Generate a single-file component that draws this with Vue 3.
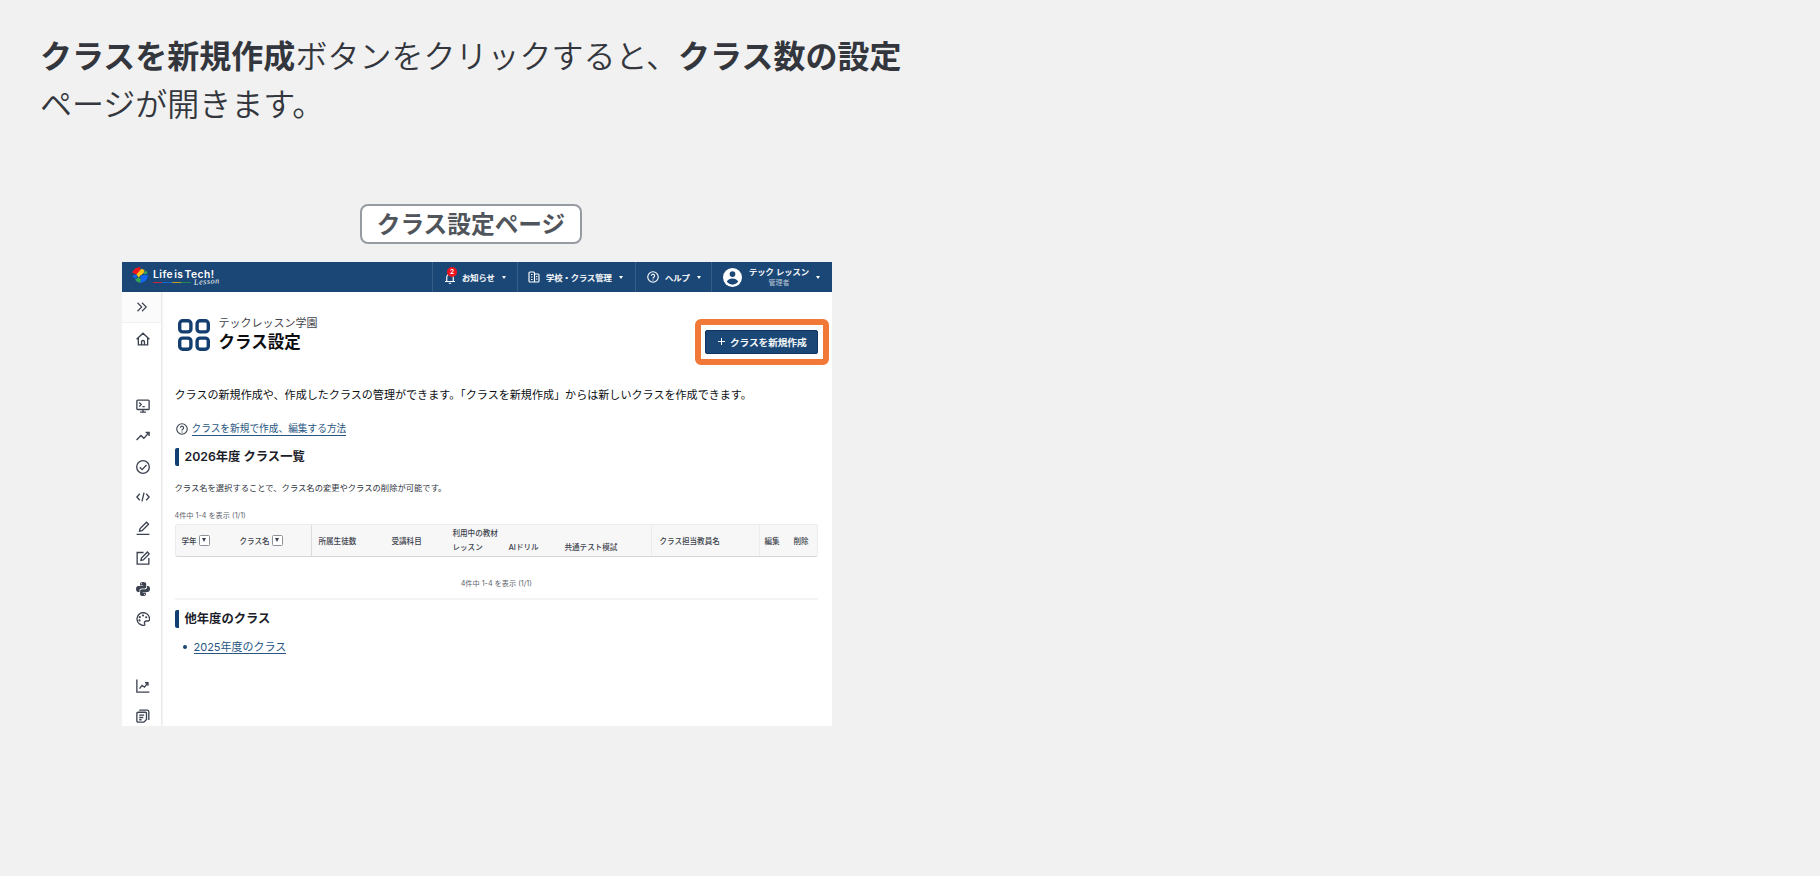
<script setup>
const navItems = [
  { id: 'news', label: 'お知らせ', badge: 2 },
  { id: 'school', label: '学校・クラス管理' },
  { id: 'help', label: 'ヘルプ' },
]

const sideIcons = [
  'home',
  'monitor',
  'trend',
  'check',
  'code',
  'pen',
  'edit',
  'python',
  'palette',
  'chart',
  'docs',
]

const countText = '4件中 1-4 を表示 (1/1)'
</script>

<template>
  <div class="slide">
    <p class="lead"><strong>クラスを新規作成</strong>ボタンをクリックすると、<strong>クラス数の設定</strong><br />ページが開きます。</p>

    <div class="figure">
      <div class="caption">クラス設定ページ</div>

      <div class="window">
        <header class="topbar">
          <div class="brand">
            <svg class="brand-mark" viewBox="0 0 16 16">
              <path d="M0.2 5.8 C1.4 2.400 4.400 0.200 8.400 0.300 L8 4.200 L4.600 7.400 Z" fill="#f2161b" />
              <path d="M4.400 7.600 L9.400 1.800 L12.600 3 L11.600 6.200 L8.400 8.600 L6.800 10.400 Z" fill="#fbc311" />
              <path d="M0.400 8.400 L4.200 7.800 L5.400 10.600 L2.400 11.600 Z" fill="#1266f1" />
              <path d="M3 12.600 L6.800 10.200 L9 12 L8.400 15.800 C6.200 15.800 4.200 14.600 3 12.600 Z" fill="#35a853" />
              <path d="M8.400 8.600 L15.900 7.800 C15.900 12.400 12.800 15.600 8.600 15.900 L9 12 Z" fill="#1266f1" />
              <path d="M11.800 5.600 L14.200 3.600 L15.600 6.200 L12.200 7.400 Z" fill="#35a853" />
            </svg>
            <div class="brand-text">
              <span class="brand-name">Life is Tech!</span>
              <div class="brand-sub">
                <span class="stripe"></span>
                <span class="lesson">Lesson</span>
              </div>
            </div>
          </div>

          <nav class="nav">
            <div v-for="item in navItems" :key="item.id" class="nav-item" :class="item.id">
              <span class="nav-icon">
                <svg v-if="item.id === 'news'" viewBox="0 0 24 24">
                  <path d="M2 19h20M5.500 19v-8a6.500 6.500 0 0 1 13 0v8M9.500 22.500h5" />
                </svg>
                <svg v-else-if="item.id === 'school'" viewBox="0 0 24 24">
                  <path d="M13 22H4a2 2 0 0 1-2-2V4a2 2 0 0 1 2-2h7a2 2 0 0 1 2 2v18h7a2 2 0 0 0 2-2V8a2 2 0 0 0-2-2h-7M6 7h3M6 12h3M6 17h3M16 11h3M16 16h3" />
                </svg>
                <svg v-else viewBox="0 0 24 24">
                  <circle cx="12" cy="12" r="10.500" />
                  <path d="M8.800 9.600a3.200 3.200 0 1 1 4.800 2.800c-1.100.7-1.600 1.200-1.600 2.400M12 16.800v2" />
                </svg>
                <span v-if="item.badge" class="badge">{{ item.badge }}</span>
              </span>
              <span class="nav-label">{{ item.label }}</span>
              <span class="caret"></span>
            </div>

            <div class="nav-item user">
              <svg class="avatar" viewBox="0 0 24 24">
                <circle cx="12" cy="12" r="12" fill="#fff" />
                <circle cx="12" cy="7.700" r="3.600" fill="#1b4776" />
                <path d="M4.800 17.200c1.400-2.600 4.200-3.900 7.200-3.900s5.800 1.300 7.200 3.900c-1.600 2.300-4.200 3.800-7.200 3.800s-5.600-1.500-7.200-3.800z" fill="#1b4776" />
              </svg>
              <div class="user-text">
                <span class="user-name">テック レッスン</span>
                <span class="user-role">管理者</span>
              </div>
              <span class="caret"></span>
            </div>
          </nav>
        </header>

        <div class="body">
          <aside class="sidebar">
            <div class="expand">
              <svg viewBox="0 0 24 24"><path d="M3 3.500l8.500 8.500L3 20.500M12 3.500l8.500 8.500-8.500 8.500" /></svg>
            </div>
            <div v-for="icon in sideIcons" :key="icon" class="side-item" :class="icon">
              <svg viewBox="0 0 24 24">
                <path v-if="icon === 'home'" d="M1 12.500L12 2l11 10.500M4 10v12h16V10M9.500 22v-5a2.500 2.500 0 0 1 5 0v5" />
                <path v-else-if="icon === 'monitor'" d="M3 2h18a1.500 1.500 0 0 1 1.500 1.500v13A1.500 1.500 0 0 1 21 18H3a1.500 1.500 0 0 1-1.500-1.500v-13A1.500 1.500 0 0 1 3 2zM12 18v4.500M7 22.500h10M5.500 6l3.500 3.500L5.500 13M11 13h4" />
                <path v-else-if="icon === 'trend'" d="M1 19l7.500-8 5 5L22 6.500M16.500 6H22.500v6" />
                <template v-else-if="icon === 'check'">
                  <circle cx="12" cy="12" r="10.800" />
                  <path d="M6.500 12.500l4 4 7.500-8" />
                </template>
                <path v-else-if="icon === 'code'" d="M6.500 6.500L1.500 12l5 5.500M17.500 6.500l5 5.500-5 5.500M13.800 4.500l-3.600 15" />
                <path v-else-if="icon === 'pen'" d="M1 23h22M6 17.500l1-4.500L18 2l3.500 3.500L10.500 16.500z" />
                <path v-else-if="icon === 'edit'" d="M13 2.500H2v20h20V12M8.500 16l.8-4L19.500 1.800l3.200 3.200L12.500 15.200z" />
                <g v-else-if="icon === 'python'" class="solid">
                  <path d="M12 0C8.500 0 7 1.200 7 3.200V6h5.500v1H4C1.500 7 0 9 0 12s1.300 5 3.500 5H6v-2.500C6 12.500 7.500 11 9.500 11h5c1.700 0 3-1.300 3-3V3.200C17.500 1.200 15.500 0 12 0zM9.500 2a1 1 0 1 1 0 2 1 1 0 0 1 0-2z" />
                  <path d="M12 24c3.500 0 5-1.200 5-3.200V18h-5.500v-1H20c2.500 0 4-2 4-5s-1.300-5-3.500-5H18.800v2.500c0 1.900-1.600 3-3.300 3h-5c-2 0-3.500 1.300-3.500 3v5.300c0 2 1.500 3.200 5 3.200zM14.500 22a1 1 0 1 1 0-2 1 1 0 0 1 0 2z" />
                </g>
                <template v-else-if="icon === 'palette'">
                  <path d="M12 1a11 11 0 1 0 1.500 22c2-.3 2-2 1.300-3.300-1-2 .2-4.200 2.700-4.200H21c1.500 0 2.300-1.500 2.300-3.500C23 5.500 18 1 12 1z" />
                  <g class="solid">
                    <circle cx="6" cy="14.500" r="1.900" />
                    <circle cx="6.500" cy="8.800" r="1.900" />
                    <circle cx="12" cy="6" r="1.900" />
                    <circle cx="17.500" cy="9" r="1.900" />
                  </g>
                </template>
                <path v-else-if="icon === 'chart'" d="M1.500 1v21.500H23M6 16.500l4.500-5.500 4 3L20 7M15.500 6.500H20.500v5" />
                <path v-else d="M3.500 5.500h12.500a2 2 0 0 1 2 2V18l-4.500 4.500H3.500a2 2 0 0 1-2-2v-13a2 2 0 0 1 2-2zM5.500 2H19a3 3 0 0 1 3 3v14M5.500 10.500h8.500M5.500 14.500h7M5.500 18.500h4" />
              </svg>
            </div>
          </aside>

          <main class="content">
            <div class="page-head">
              <svg class="page-icon" viewBox="0 0 32 32">
                <rect x="1.700" y="1.700" width="11.200" height="11.200" rx="3" />
                <rect x="19.100" y="1.700" width="11.200" height="11.200" rx="3" />
                <rect x="1.700" y="19.100" width="11.200" height="11.200" rx="3" />
                <rect x="19.100" y="19.100" width="11.200" height="11.200" rx="3" />
              </svg>
              <div class="page-title">
                <span class="school-name">テックレッスン学園</span>
                <h1>クラス設定</h1>
              </div>
              <div class="highlight">
                <button class="create-btn"><span class="plus"></span>クラスを新規作成</button>
              </div>
            </div>

            <p class="description">クラスの新規作成や、作成したクラスの管理ができます。「クラスを新規作成」からは新しいクラスを作成できます。</p>

            <div class="help-row">
              <svg viewBox="0 0 24 24">
                <circle cx="12" cy="12" r="10.500" />
                <path d="M8.800 9.600a3.200 3.200 0 1 1 4.800 2.800c-1.100.7-1.600 1.200-1.600 2.400M12 16.800v2" />
              </svg>
              <a>クラスを新規で作成、編集する方法</a>
            </div>

            <h2>2026年度 クラス一覧</h2>
            <p class="note">クラス名を選択することで、クラス名の変更やクラスの削除が可能です。</p>
            <p class="count">{{ countText }}</p>

            <div class="table-head">
              <div class="cell grade">学年<span class="filter"></span></div>
              <div class="cell name">クラス名<span class="filter"></span></div>
              <div class="cell students">所属生徒数</div>
              <div class="cell subject">受講科目</div>
              <div class="cell material">
                <span>利用中の教材</span>
                <div class="material-cols">
                  <span>レッスン</span>
                  <span>AIドリル</span>
                  <span>共通テスト模試</span>
                </div>
              </div>
              <div class="cell teacher">クラス担当教員名</div>
              <div class="cell edit">編集</div>
              <div class="cell delete">削除</div>
            </div>

            <p class="count bottom">{{ countText }}</p>

            <h2>他年度のクラス</h2>
            <ul class="years">
              <li><a>2025年度のクラス</a></li>
            </ul>
          </main>
        </div>
      </div>
    </div>
  </div>
</template>

<style>
body {
  background: #f1f1f1;
}
</style>

<style scoped>
.slide {
  box-sizing: border-box;
  height: 876px;
  padding: 30px 40px 0;
  overflow: hidden;
  font-family: Inter, 'Noto Sans CJK JP', sans-serif;
  color: #33373d;
}

.slide * {
  box-sizing: border-box;
}

p,
h1,
h2,
ul {
  margin: 0;
  padding: 0;
}

svg {
  display: block;
  flex: none;
  fill: none;
  stroke: currentColor;
  stroke-width: 2.3;
}

.lead {
  font-family: 'Noto Sans CJK JP', sans-serif;
  font-size: 32px;
  line-height: 48px;
  font-weight: 350;
  white-space: nowrap;
}

.lead strong {
  font-weight: 700;
}

.figure {
  display: flex;
  flex-direction: column;
  width: 710px;
  margin: 78px 0 0 82px;
}

.caption {
  width: 222px;
  height: 40px;
  margin-left: 238px;
  padding-top: 1px;
  border: 2px solid #969ba1;
  border-radius: 8px;
  background: #fff;
  font-size: 23.7px;
  line-height: 36px;
  font-weight: 600;
  text-align: center;
  color: #50555b;
  white-space: nowrap;
}

.window {
  display: flex;
  flex-direction: column;
  height: 464px;
  margin-top: 18px;
  overflow: hidden;
  background: #fff;
  white-space: nowrap;
}

.topbar {
  display: flex;
  justify-content: space-between;
  flex: none;
  height: 30px;
  background: #1b4776;
  color: #fff;
}

.brand {
  display: flex;
  padding: 5px 0 0 10px;
}

.brand-mark {
  width: 16px;
  height: 16px;
  stroke: none;
}

.brand-text {
  margin-left: 5px;
}

.brand-name {
  display: block;
  height: 13px;
  font-size: 10.3px;
  line-height: 14px;
  font-weight: 600;
  letter-spacing: 0.45px;
  word-spacing: -2px;
}

.brand-sub {
  display: flex;
  height: 6px;
}

.stripe {
  width: 38px;
  height: 1px;
  margin-top: 2px;
  background: linear-gradient(90deg, #c8283a 25%, #1266d8 25% 50%, #b99a2c 50% 75%, #218a52 75%);
}

.lesson {
  margin-left: 3px;
  font-family: 'Liberation Serif', serif;
  font-size: 8px;
  line-height: 4px;
  font-style: italic;
  letter-spacing: 0.6px;
  transform: rotate(-4deg);
}

.nav {
  display: flex;
}

.nav-item {
  display: flex;
  align-items: center;
  border-left: 1px solid #365d87;
  font-size: 8.25px;
  font-weight: 500;
}

.nav-item.news {
  width: 85px;
  padding-left: 11px;
}

.nav-item.school {
  width: 118px;
  padding-left: 10px;
}

.nav-item.help {
  width: 76px;
  padding-left: 11px;
}

.nav-item.user {
  width: 121px;
  padding-left: 11px;
}

.nav-label,
.user-name {
  -webkit-text-stroke: 0.2px currentColor;
}

.nav-label {
  margin-top: -1px;
}

.nav-icon {
  position: relative;
  margin-right: 6px;
}

.nav-icon svg {
  width: 12px;
  height: 12px;
}

.news .nav-icon svg {
  margin-top: 2px;
}

.badge {
  position: absolute;
  top: -3px;
  left: 3px;
  width: 10px;
  height: 10px;
  border-radius: 50%;
  background: #ee1420;
  font-size: 6.5px;
  line-height: 10px;
  font-weight: 600;
  text-align: center;
}

.caret {
  margin-left: 7px;
  border: 2.5px solid transparent;
  border-top: 3.5px solid #fff;
  border-bottom: 0;
}

.avatar {
  width: 19px;
  height: 19px;
  stroke: none;
}

.user-text {
  display: flex;
  flex-direction: column;
  align-items: center;
  width: 60px;
  margin-left: 7px;
}

.user-name {
  line-height: 11px;
}

.user-role {
  font-size: 7px;
  line-height: 10px;
  font-weight: 400;
  color: #b9c6d5;
}

.body {
  display: flex;
  flex: 1;
  min-height: 0;
}

.sidebar {
  flex: none;
  width: 39px;
  color: #3c4350;
  box-shadow: 1px 0 2px rgba(0, 0, 0, 0.12);
}

.expand {
  display: flex;
  align-items: center;
  height: 31px;
  padding-left: 14px;
  border-bottom: 1px solid #f0f0f0;
  background: #fbfbfb;
}

.expand svg {
  width: 12px;
  height: 12px;
  margin-top: -1px;
}

.side-item {
  display: flex;
  align-items: center;
  justify-content: center;
  height: 30.5px;
  padding: 1.5px 0 0 3px;
}

.side-item svg {
  width: 14px;
  height: 14px;
}

.side-item.monitor,
.side-item.chart {
  margin-top: 36px;
}

.solid {
  fill: currentColor;
  stroke: none;
}

.content {
  flex: 1;
  padding: 26px 14px 0 13.5px;
}

.page-head {
  display: flex;
  height: 48px;
}

.page-icon {
  width: 32px;
  height: 32px;
  margin: 0.5px 0 0 3px;
  color: #153e70;
  stroke-width: 3.4;
}

.page-title {
  margin-left: 9px;
}

.school-name {
  display: block;
  margin-top: -2px;
  font-size: 11px;
  line-height: 15px;
  color: #3f444c;
}

h1 {
  font-size: 16.5px;
  line-height: 23px;
  font-weight: 700;
  color: #0c0e12;
}

.highlight {
  width: 134px;
  height: 46px;
  margin: 1px -11px 0 auto;
  padding: 5px 4px;
  border: 6px solid #f27838;
  border-radius: 6px;
}

.create-btn {
  display: flex;
  align-items: center;
  width: 113px;
  height: 24px;
  padding: 0 0 1px 12px;
  border: 1px solid #0d3464;
  border-radius: 2px;
  background: #1b4776;
  color: #fff;
  font-family: inherit;
  font-size: 9.6px;
  font-weight: 500;
  white-space: nowrap;
  -webkit-text-stroke: 0.2px #fff;
}

.plus {
  width: 7px;
  height: 7px;
  margin-right: 5px;
  background:
    linear-gradient(#fff, #fff) center / 7px 1px no-repeat,
    linear-gradient(#fff, #fff) center / 1px 7px no-repeat;
}

.description {
  margin-top: 20px;
  font-size: 11.07px;
  line-height: 18px;
  color: #0c0e12;
}

.help-row {
  display: flex;
  align-items: center;
  height: 14px;
  margin-top: 18px;
  padding-left: 1px;
  color: #3c4350;
}

.help-row svg {
  width: 12px;
  height: 12px;
}

a {
  color: #285681;
  border-bottom: 1px solid #285681;
}

.help-row a {
  height: 13px;
  margin-left: 4px;
  font-size: 9.7px;
  line-height: 12px;
}

h2 {
  height: 18px;
  padding-left: 6px;
  border-left: 4px solid #123f71;
  border-radius: 2px;
  font-size: 12.3px;
  line-height: 18px;
  font-weight: 600;
  color: #1b2028;
}

.help-row + h2 {
  margin-top: 12px;
}

.note {
  margin-top: 16px;
  font-size: 8.3px;
  line-height: 12px;
  color: #30353e;
}

.count {
  margin-top: 17px;
  font-size: 7.2px;
  line-height: 10px;
  color: #5d636c;
}

.table-head {
  display: flex;
  height: 33px;
  margin-top: 3px;
  border: 1px solid #ececec;
  border-bottom-color: #d4d5d7;
  border-radius: 3px;
  background: #f7f7f7;
  font-size: 7.55px;
  font-weight: 500;
  color: #3c424c;
}

.cell {
  display: flex;
  align-items: center;
  flex: none;
  padding-bottom: 1px;
}

.cell.grade {
  width: 58px;
  padding-left: 6px;
}

.cell.name {
  width: 78px;
  padding-left: 6px;
  border-right: 1px solid #dcdcdc;
}

.cell.students {
  width: 73px;
  padding-left: 7px;
}

.cell.subject {
  width: 62px;
  padding-left: 7px;
}

.cell.material {
  flex-direction: column;
  align-items: flex-start;
  width: 205px;
  padding: 2px 0 0 6px;
  border-right: 1px solid #ececec;
  line-height: 14px;
}

.material-cols {
  display: flex;
}

.material-cols span {
  width: 56px;
}

.cell.teacher {
  width: 108px;
  padding-left: 8px;
  border-right: 1px solid #ececec;
}

.cell.edit {
  width: 29px;
  padding-left: 5px;
}

.cell.delete {
  padding-left: 5px;
}

.filter {
  display: flex;
  align-items: center;
  justify-content: center;
  width: 11px;
  height: 11px;
  margin-left: 2px;
  border: 1px solid #8d9299;
  border-radius: 1.5px;
  background: #fff;
}

.filter::after {
  content: '';
  border: 2.5px solid transparent;
  border-top: 4px solid #3c4350;
  border-bottom: 0;
}

.count.bottom {
  height: 43px;
  margin: 0 0 10px;
  padding-top: 22px;
  border-bottom: 2px solid #f4f4f4;
  text-align: center;
}

.years {
  display: flex;
  margin-top: 12px;
  list-style: none;
  font-size: 11px;
  line-height: 15px;
}

.years li {
  display: flex;
  align-items: center;
  gap: 7px;
  padding-left: 8px;
}

.years li::before {
  content: '';
  width: 4px;
  height: 4px;
  border-radius: 50%;
  background: #1b4776;
}

.years a {
  height: 14px;
  line-height: 14px;
}
</style>
